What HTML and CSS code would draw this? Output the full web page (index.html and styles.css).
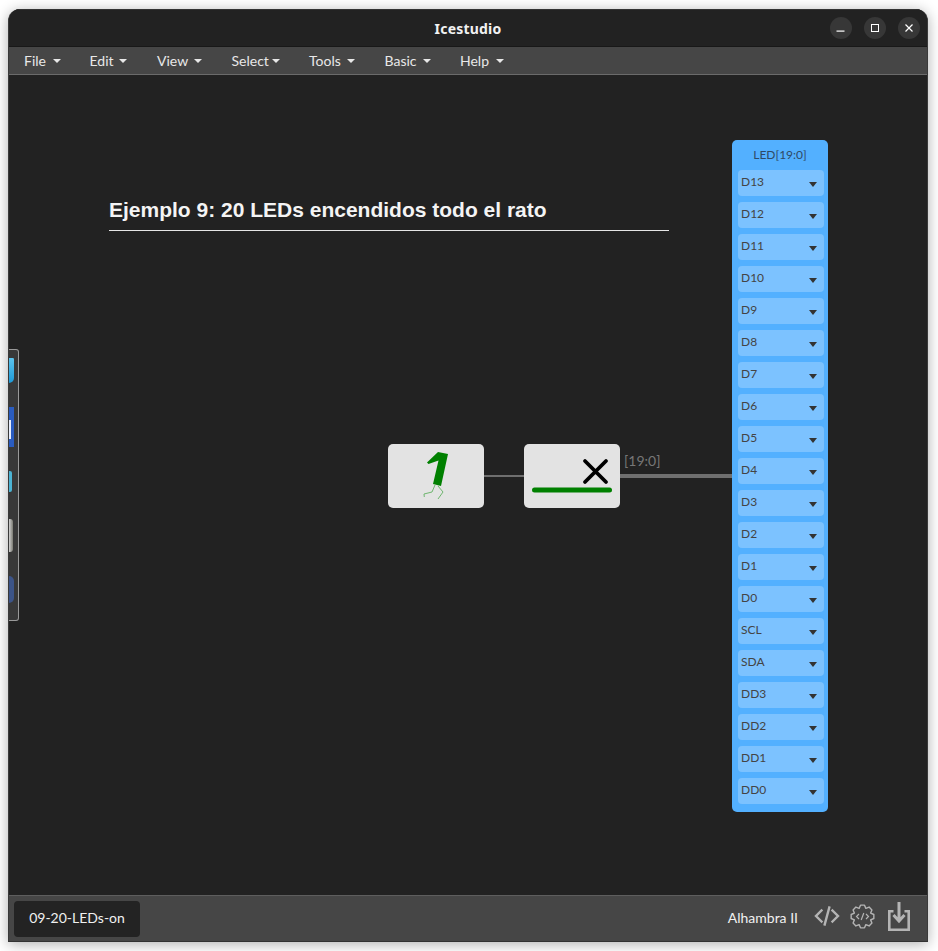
FILE: index.html
```html
<!DOCTYPE html>
<html lang="en">
<head>
<meta charset="utf-8">
<title>Icestudio</title>
<link rel="stylesheet" href="styles.css">
</head>
<body>
<div class="window">
  <header class="titlebar">
    <div class="title">Icestudio</div>
    <div class="win-buttons">
      <button class="win-btn"><svg width="16" height="16" viewBox="0 0 16 16"><rect x="3.500" y="10.500" width="8" height="1.200" fill="#fff"/></svg></button>
      <button class="win-btn"><svg width="16" height="16" viewBox="0 0 16 16"><rect x="4.500" y="4.500" width="7" height="7" fill="none" stroke="#fff" stroke-width="1"/></svg></button>
      <button class="win-btn"><svg width="16" height="16" viewBox="0 0 16 16"><path d="M4.500 4.500l7 7M11.500 4.500l-7 7" stroke="#fff" stroke-width="1.200" fill="none"/></svg></button>
    </div>
  </header>
  <nav class="menubar">
    <span class="menu m-file">File <i class="caret"></i></span>
    <span class="menu m-edit">Edit <i class="caret"></i></span>
    <span class="menu m-view">View <i class="caret"></i></span>
    <span class="menu m-select">Select<i class="caret"></i></span>
    <span class="menu m-tools">Tools <i class="caret"></i></span>
    <span class="menu m-basic">Basic <i class="caret"></i></span>
    <span class="menu m-help">Help <i class="caret"></i></span>
  </nav>
  <main class="canvas">
    <div class="dock">
      <span class="dock-i d1"></span>
      <span class="dock-i d2"></span>
      <span class="dock-i d3"></span>
      <span class="dock-i d4"></span>
      <span class="dock-i d5"></span>
    </div>
    <div class="comment">Ejemplo 9: 20 LEDs encendidos todo el rato</div>
    <div class="wire wire-thin"></div>
    <div class="wire wire-bus"></div>
    <div class="bus-label">[19:0]</div>
    <div class="node node-one">
      <svg width="96" height="64" viewBox="0 0 96 64">
        <path d="M39 18.500L50 8 60 10 53 42 45 40 50.500 16.500 40.500 20Z" fill="#008000"/>
        <path d="M47 41l-3 7-8 2 .3 3M50 42l5 6-5 7" fill="none" stroke="#6fb66f" stroke-width="1"/>
      </svg>
    </div>
    <div class="node node-x">
      <svg width="96" height="64" viewBox="0 0 96 64">
        <path d="M61 17l21 21M82 17l-21 21" stroke="#000" stroke-width="3.800" stroke-linecap="round" fill="none"/>
        <path d="M10.500 46h75" stroke="#008000" stroke-width="5" stroke-linecap="round" fill="none"/>
      </svg>
    </div>
    <div class="led-block">
      <div class="led-name">LED[19:0]</div>
      <div class="pin"><span>D13</span><i></i></div>
      <div class="pin"><span>D12</span><i></i></div>
      <div class="pin"><span>D11</span><i></i></div>
      <div class="pin"><span>D10</span><i></i></div>
      <div class="pin"><span>D9</span><i></i></div>
      <div class="pin"><span>D8</span><i></i></div>
      <div class="pin"><span>D7</span><i></i></div>
      <div class="pin"><span>D6</span><i></i></div>
      <div class="pin"><span>D5</span><i></i></div>
      <div class="pin"><span>D4</span><i></i></div>
      <div class="pin"><span>D3</span><i></i></div>
      <div class="pin"><span>D2</span><i></i></div>
      <div class="pin"><span>D1</span><i></i></div>
      <div class="pin"><span>D0</span><i></i></div>
      <div class="pin"><span>SCL</span><i></i></div>
      <div class="pin"><span>SDA</span><i></i></div>
      <div class="pin"><span>DD3</span><i></i></div>
      <div class="pin"><span>DD2</span><i></i></div>
      <div class="pin"><span>DD1</span><i></i></div>
      <div class="pin"><span>DD0</span><i></i></div>
    </div>
  </main>
  <footer class="footer">
    <div class="file-tab">09-20-LEDs-on</div>
    <div class="footer-right">
      <span class="board">Alhambra II</span>
      <svg class="f-icon" width="26" height="20" viewBox="0 0 26 20"><path d="M7.500 4.500L2 10l5.500 5.500M18.500 4.500L24 10l-5.500 5.500M15.300 1.500l-4.600 17" fill="none" stroke="#b4b4b4" stroke-width="2.400" stroke-linecap="square"/></svg>
      <svg class="f-icon" width="25" height="25" viewBox="0 0 25 25"><path d="M23.830 10.500V14.500L20.630 15.870 21.920 19.100 19.100 21.920 15.870 20.630 14.500 23.830H10.500L9.130 20.630 5.900 21.920 3.080 19.100 4.370 15.870 1.170 14.500V10.500L4.370 9.130 3.080 5.900 5.900 3.080 9.130 4.370 10.500 1.170H14.500L15.870 4.370 19.100 3.080 21.920 5.900 20.630 9.130Z" fill="none" stroke="#b4b4b4" stroke-width="1.400" stroke-linejoin="round"/><path d="M9 10l-2.500 2.500L9 15M16 10l2.500 2.500L16 15M13.800 9l-2.600 7" fill="none" stroke="#b4b4b4" stroke-width="1.200"/></svg>
      <svg class="f-icon" width="22" height="29" viewBox="0 0 22 29"><path d="M5.500 9.300H1.300v18.400h19.400V9.300h-4.200" fill="none" stroke="#b4b4b4" stroke-width="2.600"/><path d="M11 0v19M5.500 13l5.500 6 5.500-6" fill="none" stroke="#b4b4b4" stroke-width="3"/></svg>
    </div>
  </footer>
</div>
</body>
</html>
```
FILE: styles.css
```css
* { box-sizing: border-box; }
html, body { margin: 0; height: 100%; }
body {
  width: 938px;
  height: 951px;
  overflow: hidden;
  background: #fff;
  padding: 9px 10px 9px 8px;
  font-family: "Lato", "Liberation Sans", sans-serif;
}
.window {
  width: 920px;
  height: 933px;
  display: flex;
  flex-direction: column;
  background: #222;
  border-radius: 12px 12px 0 0;
  box-shadow: 0 2px 14px rgba(0,0,0,.32);
  overflow: hidden;
  border-left: 1px solid #3a3a3a;
  border-right: 1px solid #3a3a3a;
  border-bottom: 1px solid #333;
}
.titlebar {
  height: 38px;
  flex: none;
  background: #222;
  border-top: 1px solid #333;
  border-bottom: 1px solid #181818;
  display: flex;
  align-items: center;
  justify-content: center;
  position: relative;
}
.title {
  color: #f2f2f2;
  font-family: "Noto Sans", sans-serif;
  font-weight: 700;
  font-size: 14px;
  letter-spacing: .2px;
  padding-top: 1px;
}
.win-buttons {
  position: absolute;
  right: 7px;
  top: 7px;
  display: flex;
  gap: 12px;
}
.win-btn {
  width: 22px;
  height: 22px;
  padding: 0;
  border: 0;
  border-radius: 50%;
  background: #373737;
  display: flex;
  align-items: center;
  justify-content: center;
}
.menubar {
  height: 28px;
  flex: none;
  background: #464646;
  border-bottom: 1px solid #6b6b6b;
  color: #e8e8e8;
  font-size: 14px;
  display: flex;
  align-items: center;
  padding-left: 15px;
}
.menu { display: inline-flex; align-items: center; white-space: pre; }
.m-file { width: 65.500px; }
.m-edit { width: 67.500px; }
.m-view { width: 74.500px; }
.m-select { width: 77.500px; }
.m-tools { width: 75.500px; }
.m-basic { width: 75.500px; }
.caret {
  display: inline-block;
  width: 0;
  height: 0;
  margin-left: 3px;
  border-left: 4px solid transparent;
  border-right: 4px solid transparent;
  border-top: 4px solid #e8e8e8;
}
.m-edit .caret { margin-left: 2px; }
.canvas {
  position: relative;
  flex: 1;
  background: #222;
}
.dock {
  position: absolute;
  left: -1px;
  top: 274px;
  width: 11px;
  height: 272px;
  background: #383838;
  border: 1px solid #9a9a9a;
  border-left: 0;
  border-radius: 0 3px 3px 0;
}
.dock-i { position: absolute; left: 1px; width: 5px; }
.d1 { top: 8px; height: 25px; background: linear-gradient(#5cc4ee, #1d9ad8); border-radius: 0 2px 8px 0; }
.d2 { top: 57px; height: 40px; background: #2a5cc0; }
.d2::before {
  content: "";
  position: absolute;
  left: 0;
  top: 13px;
  width: 2px;
  height: 19px;
  background: #e8eefc;
}
.d3 { top: 121px; height: 21px; width: 3px; background: #4cb4d4; border-radius: 0 2px 2px 0; }
.d4 { top: 169px; height: 33px; width: 4px; background: linear-gradient(90deg, #d0d0d0, #7a7a72); border-radius: 0 3px 3px 0; }
.d5 { top: 226px; height: 27px; background: #3c5488; border-radius: 0 14px 14px 0; }
.comment {
  position: absolute;
  left: 100px;
  top: 122px;
  width: 560px;
  height: 34px;
  border-bottom: 1px solid #e6e6e6;
  color: #f4f4f4;
  font-family: "Liberation Sans", sans-serif;
  font-weight: 700;
  font-size: 21px;
  line-height: 26px;
}
.wire { position: absolute; background: #6f6f6f; }
.wire-thin { left: 470px; top: 400px; width: 46px; height: 2px; }
.wire-bus { left: 606px; top: 399px; width: 120px; height: 4px; }
.bus-label {
  position: absolute;
  left: 615px;
  top: 377px;
  color: #777;
  font-size: 14px;
  line-height: 18px;
}
.node {
  position: absolute;
  width: 96px;
  height: 64px;
  top: 369px;
  background: #e3e3e3;
  border-radius: 5px;
}
.node svg { display: block; }
.node-one { left: 379px; }
.node-x { left: 515px; }
.led-block {
  position: absolute;
  left: 723px;
  top: 65px;
  width: 96px;
  height: 672px;
  background: #53b0ff;
  border-radius: 5px;
  padding: 0 4px 0 6px;
  display: flex;
  flex-direction: column;
  gap: 6px;
}
.led-name {
  height: 24px;
  margin-right: 2px;
  color: #2f4a66;
  font-size: 12px;
  line-height: 30px;
  text-align: center;
}
.pin {
  height: 26px;
  background: #7cc2ff;
  border-radius: 4px;
  display: flex;
  justify-content: space-between;
  padding: 0 7px 0 3px;
  color: #444;
  font-size: 12px;
  line-height: 24px;
}
.pin i {
  width: 0;
  height: 0;
  margin-top: 12px;
  border-left: 4px solid transparent;
  border-right: 4px solid transparent;
  border-top: 5px solid #333;
}
.footer {
  height: 46px;
  flex: none;
  background: #464646;
  border-top: 1px solid #5e5e5e;
  display: flex;
  align-items: center;
  justify-content: space-between;
  padding: 0 17px 0 5px;
}
.file-tab {
  width: 126px;
  height: 36px;
  background: #232323;
  border-radius: 4px;
  color: #f0f0f0;
  font-size: 14px;
  line-height: 34px;
  text-align: center;
}
.footer-right { display: flex; align-items: center; gap: 10px; margin-bottom: 5px; }
.board { color: #f0f0f0; font-size: 14px; margin: 3px 6px 0 0; }
.f-icon { display: block; }
.f-icon:last-child { margin-left: 3px; }
```
